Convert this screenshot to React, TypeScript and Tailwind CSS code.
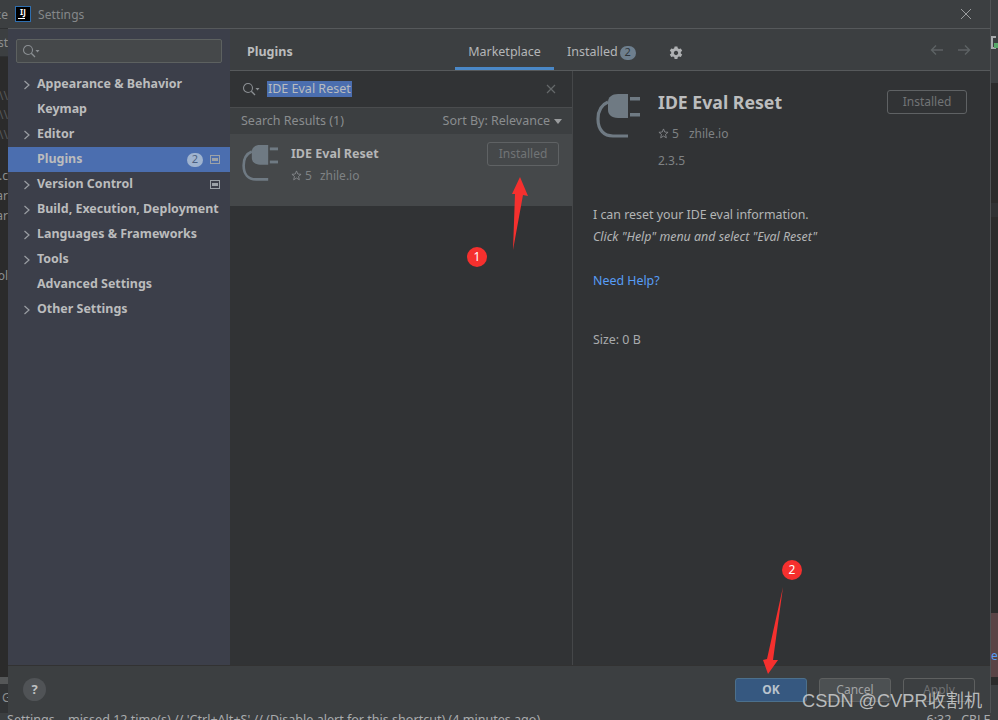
import React from "react";

const FONT = { fontFamily: '"Noto Sans", "Open Sans", sans-serif' };

function Chevron() {
  return (
    <svg width="8" height="10" viewBox="0 0 8 10" className="shrink-0">
      <path d="M1.5 1 L6 5 L1.5 9" fill="none" stroke="#9a9ea3" strokeWidth="1.2" />
    </svg>
  );
}

function Frame() {
  return (
    <svg width="11" height="9" viewBox="0 0 11 9" className="shrink-0">
      <rect x="0.5" y="0.5" width="9" height="8" fill="none" stroke="#9ca2a8" />
      <rect x="2" y="3" width="6" height="3" fill="#9ca2a8" />
    </svg>
  );
}

function SearchIcon() {
  return (
    <svg width="18" height="14" viewBox="0 0 18 14" className="shrink-0">
      <circle cx="6" cy="6" r="4.5" fill="none" stroke="#8b8f93" strokeWidth="1.1" />
      <path d="M9.3 9.3 L13 13" stroke="#8b8f93" strokeWidth="1.3" />
      <path d="M13.5 6 L17.5 6 L15.5 8.5 Z" fill="#8b8f93" />
    </svg>
  );
}

function Plug({ className }: { className: string }) {
  return (
    <svg viewBox="0 0 44 44" className={className}>
      <path d="M12 8 C5 11 2 17 2 25 C2 36 8 42 17 42 L32 42" fill="none" stroke="#6f7a83" strokeWidth="3.2" />
      <path d="M22 0 L32 0 L32 24 L22 24 C15 24 12 20 12 16 L12 8 C12 3 16 0 22 0 Z" fill="#6f7a83" />
      <rect x="34" y="3" width="10" height="3.5" fill="#6f7a83" />
      <rect x="34" y="19" width="10" height="3.5" fill="#6f7a83" />
    </svg>
  );
}

function Star() {
  return (
    <svg width="11" height="11" viewBox="0 0 12 12">
      <path d="M6 1 L7.4 4.4 L11 4.7 L8.2 7 L9.1 10.7 L6 8.8 L2.9 10.7 L3.8 7 L1 4.7 L4.6 4.4 Z" fill="none" stroke="#8a8d90" strokeWidth="0.9" />
    </svg>
  );
}

const items: { label: string; chevron?: boolean; selected?: boolean; badge?: boolean; frame?: boolean }[] = [
  { label: "Appearance & Behavior", chevron: true },
  { label: "Keymap" },
  { label: "Editor", chevron: true },
  { label: "Plugins", selected: true, badge: true, frame: true },
  { label: "Version Control", chevron: true, frame: true },
  { label: "Build, Execution, Deployment", chevron: true },
  { label: "Languages & Frameworks", chevron: true },
  { label: "Tools", chevron: true },
  { label: "Advanced Settings" },
  { label: "Other Settings", chevron: true },
];

function Sidebar() {
  return (
    <aside className="w-[222px] shrink-0 bg-[#3c3f4a] flex flex-col">
      <div className="mx-2 mt-[10px] h-6 border border-[#5d6160] bg-[#45484a] rounded-[2px] flex items-center pl-[5px] shrink-0">
        <SearchIcon />
      </div>
      <nav className="mt-[9px] flex flex-col">
        {items.map((it) => (
          <div key={it.label} className={`h-[25px] flex items-center pl-[15px] pr-[9px] ${it.selected ? "bg-[#4b6eaf]" : ""}`}>
            <span className="w-[14px] shrink-0 flex">{it.chevron && <Chevron />}</span>
            <span className="text-[12.45px] font-bold text-[#bbbcbd] whitespace-nowrap">{it.label}</span>
            <span className="ml-auto flex items-center gap-[7px]">
              {it.badge && (
                <span className="w-4 h-[14px] rounded-full bg-[#9fb3cf] text-[#4b5f80] text-[11px] flex items-center justify-center">2</span>
              )}
              {it.frame && <Frame />}
            </span>
          </div>
        ))}
      </nav>
    </aside>
  );
}

function Header() {
  return (
    <div className="h-[42px] shrink-0 border-b border-[#56595b] flex pl-[17px] pr-[19px] items-center bg-[#3c3f41]">
      <span className="w-[208px] shrink-0 text-[12.5px] font-bold text-[#bbbcbd] mt-[5px]">Plugins</span>
      <div className="h-full flex">
        <div className="w-[99px] h-full border-b-[3px] border-[#4a88c7] flex items-center justify-center text-[12.5px] text-[#b4b6b8] pt-[9px]">Marketplace</div>
        <div className="ml-[13px] flex items-center text-[12.5px] text-[#b4b6b8] gap-[2px] pt-[6px]">
          Installed
          <span className="w-4 h-[14px] rounded-full bg-[#6e7f8e] text-[#2f353a] text-[11px] flex items-center justify-center">2</span>
        </div>
        <svg width="14" height="14" viewBox="0 0 14 14" className="ml-[33px] self-center mt-[6px]">
          <path d="M5.6 0.5 h2.8 l0.4 1.8 l1.2 0.7 l1.8-0.6 l1.4 2.4 l-1.4 1.2 v1.4 l1.4 1.2 l-1.4 2.4 l-1.8-0.6 l-1.2 0.7 l-0.4 1.8 h-2.8 l-0.4-1.8 l-1.2-0.7 l-1.8 0.6 l-1.4-2.4 l1.4-1.2 v-1.4 l-1.4-1.2 l1.4-2.4 l1.8 0.6 l1.2-0.7 Z M7 4.8 a2.2 2.2 0 1 0 0.01 0 Z" fill="#afb1b3" fillRule="evenodd" />
        </svg>
      </div>
      <div className="ml-auto flex gap-[13px] items-center">
        <svg width="14" height="12" viewBox="0 0 14 12"><path d="M13 6 H2 M6 1.5 L1.5 6 L6 10.5" fill="none" stroke="#5d6264" strokeWidth="1.4" /></svg>
        <svg width="14" height="12" viewBox="0 0 14 12"><path d="M1 6 H12 M8 1.5 L12.5 6 L8 10.5" fill="none" stroke="#5d6264" strokeWidth="1.4" /></svg>
      </div>
    </div>
  );
}

function ResultsPane() {
  return (
    <section className="w-[343px] shrink-0 border-r border-[#454749] flex flex-col">
      <div className="h-[37px] shrink-0 border-b border-[#4a4c4e] flex items-center pl-[12px] pr-[16px]">
        <SearchIcon />
        <span className="ml-[7px] bg-[#4b6eaf] text-[#b9bcbf] text-[12.5px] leading-[16px] px-[1px]">IDE Eval Reset</span>
        <svg width="10" height="10" viewBox="0 0 10 10" className="ml-auto"><path d="M1 1 L9 9 M9 1 L1 9" stroke="#65686a" strokeWidth="1.2" /></svg>
      </div>
      <div className="h-[26px] shrink-0 bg-[#3c3f41] flex items-center pl-[11px] pr-[10px] text-[12.5px] text-[#8a8d8f]">
        Search Results (1)
        <span className="ml-auto flex items-center gap-[4px]">
          Sort By: Relevance
          <svg width="8" height="5" viewBox="0 0 8 5"><path d="M0 0 H8 L4 5 Z" fill="#9a9c9e" /></svg>
        </span>
      </div>
      <div className="h-[72px] shrink-0 bg-[#45484a] flex pl-[12px] pr-[13px] pt-[11px]">
        <Plug className="w-[36px] h-[36px] shrink-0" />
        <div className="ml-[13px] flex flex-col">
          <span className="text-[12.5px] font-bold text-[#b5b6b7] leading-[17px]">IDE Eval Reset</span>
          <span className="mt-[5px] flex items-center gap-[3px] text-[12px] text-[#7f8284] leading-[17px]">
            <Star />5<span className="ml-[5px]">zhile.io</span>
          </span>
        </div>
        <div className="ml-auto w-[72px] h-[24px] -mt-[3px] border border-[#5f6264] rounded-[3px] text-[12px] text-[#717476] flex items-center justify-center">Installed</div>
      </div>
    </section>
  );
}

function DetailPane() {
  return (
    <section className="flex-1 min-w-0 pl-[20px] pr-[23px] pt-[18px] text-[12.4px] text-[#a9abad]">
      <div className="flex">
        <Plug className="w-[44px] h-[44px] shrink-0 ml-[3px] mt-[5px]" />
        <div className="ml-[18px] flex flex-col">
          <span className="text-[17.7px] font-bold text-[#bcbdbe] leading-[26px]">IDE Eval Reset</span>
          <span className="mt-[10px] flex items-center gap-[3px] text-[12px] text-[#7f8284] leading-[17px]">
            <Star />5<span className="ml-[7px]">zhile.io</span>
          </span>
          <span className="mt-[10px] text-[12px] text-[#7f8284] leading-[17px]">2.3.5</span>
        </div>
        <div className="ml-auto w-20 h-6 mt-[1px] border border-[#5f6264] rounded-[3px] text-[12px] text-[#717476] flex items-center justify-center">Installed</div>
      </div>
      <p className="mt-[35px] leading-[22px] text-[#b3b5b6]">I can reset your IDE eval information.</p>
      <p className="leading-[22px] italic text-[#b3b5b6]">Click "Help" menu and select "Eval Reset"</p>
      <p className="mt-[22px] leading-[22px] text-[#589df6]">Need Help?</p>
      <p className="mt-[37px] leading-[22px]">Size: 0 B</p>
    </section>
  );
}

function Footer() {
  return (
    <div className="h-[48px] shrink-0 border-t border-[#323232] bg-[#3c3f41] flex items-center pl-[15px] pr-[15px]">
      <span className="w-[23px] h-[23px] rounded-full bg-[#505356] text-[#bfc1c2] text-[13px] font-bold flex items-center justify-center">?</span>
      <div className="ml-auto flex gap-[12px] mt-[1px]">
        <div className="w-[72px] h-6 rounded-[3px] border border-[#4c708c] bg-[#365880] text-[#b9c3cd] text-[12px] font-bold flex items-center justify-center">OK</div>
        <div className="w-[72px] h-6 rounded-[3px] border border-[#5e6060] bg-[#4c5052] text-[#a2a4a5] text-[12px] flex items-center justify-center">Cancel</div>
        <div className="w-[72px] h-6 rounded-[3px] border border-[#5e6060] text-[#6f7173] text-[12px] flex items-center justify-center">Apply</div>
      </div>
    </div>
  );
}

function Arrow({ d }: { d: string }) {
  return (
    <svg className="absolute left-0 top-0 pointer-events-none" width="998" height="720" viewBox="0 0 998 720">
      <path d={d} fill="#f5302e" />
    </svg>
  );
}

function Marker({ n, className }: { n: string; className: string }) {
  return (
    <span className={`absolute w-5 h-5 rounded-full bg-[#f5302e] text-white text-[12px] flex items-center justify-center ${className}`}>{n}</span>
  );
}

function LeftStrip() {
  return (
    <div className="w-[8px] shrink-0 flex flex-col text-[12px] text-[#8d8f90] overflow-hidden relative bg-[#2b2b2b]">
      <div className="h-[28px] bg-[#3c3f41] shrink-0" />
      <div className="h-[29px] bg-[#3c3f41] shrink-0 border-t border-[#2f3133] border-b" />
      <div className="flex-1" />
      <div className="h-[7px] bg-[#555758] shrink-0" />
      <div className="h-[29px] bg-[#313335] shrink-0" />
      <span className="absolute right-0 top-[6px]">ce</span>
      <span className="absolute right-0 top-[34px]">st</span>
      <span className="absolute right-0 top-[87px] text-[#55585a]">\\</span>
      <span className="absolute right-0 top-[106px] text-[#55585a]">\\</span>
      <span className="absolute right-0 top-[126px] text-[#55585a]">\\</span>
      <span className="absolute right-0 top-[167px]">.c</span>
      <span className="absolute right-0 top-[187px]">ar</span>
      <span className="absolute right-0 top-[207px]">ar</span>
      <span className="absolute right-0 top-[267px]">ol</span>
      <span className="absolute left-[2px] top-[689px]">G</span>
    </div>
  );
}

function RightStrip() {
  return (
    <div className="flex-1 flex flex-col relative overflow-hidden bg-[#2b2b2b] border-l border-[#505355]">
      <div className="h-[83px] bg-[#3c3f41] shrink-0" />
      <div className="h-[120px] shrink-0" />
      <div className="h-[14px] bg-[#303234] shrink-0" />
      <div className="flex-1" />
      <div className="h-[64px] bg-[#5a4446] shrink-0 text-[12px] text-[#589df6] leading-[15px] pt-[35px]">e</div>
      <div className="h-[8px] shrink-0" />
      <div className="h-[28px] bg-[#3c3f41] shrink-0" />
      <span className="absolute left-0 top-[36px] w-[5px] h-[13px] border-2 border-r-0 border-[#a9abad]" />
      <span className="absolute left-[3px] top-[43px] w-[4px] h-[5px] bg-[#59a869]" />
    </div>
  );
}

export default function App() {
  return (
    <div className="relative w-[998px] h-[720px] overflow-hidden bg-[#2b2b2b] flex flex-col" style={FONT}>
      <div className="flex h-[713px] shrink-0">
        <LeftStrip />
        <div className="w-[982px] shrink-0 flex flex-col bg-[#3c3f41]">
          <div className="h-[29px] shrink-0 border-b border-[#56595b] flex items-center pl-[7px] pr-[18px]">
            <span className="w-4 h-4 bg-black border border-[#2f6fb0] flex flex-col items-center">
              <span className="text-white text-[8px] font-bold leading-[9px]">IJ</span>
              <span className="w-[7px] h-px bg-white mt-[2px] self-start ml-[2px]" />
            </span>
            <span className="ml-[7px] text-[12px] tracking-[0.1px] text-[#85888a] mt-[1px]">Settings</span>
            <svg width="12" height="12" viewBox="0 0 12 12" className="ml-auto"><path d="M1 1 L11 11 M11 1 L1 11" stroke="#9a9c9e" strokeWidth="1" /></svg>
          </div>
          <div className="flex-1 min-h-0 flex">
            <Sidebar />
            <div className="flex-1 min-w-0 flex flex-col">
              <Header />
              <div className="flex-1 min-h-0 flex bg-[#313335]">
                <ResultsPane />
                <DetailPane />
              </div>
            </div>
          </div>
          <Footer />
        </div>
        <RightStrip />
      </div>
      <div className="h-[7px] shrink-0 bg-[#3c3f41] text-[12.55px] text-[#a9abad] leading-[12px] pl-[7px] whitespace-nowrap overflow-hidden flex pt-[1px]">
        Settings... missed 12 time(s) // 'Ctrl+Alt+S' // (Disable alert for this shortcut) (4 minutes ago)
        <span className="ml-auto pr-[8px]">6:32 &nbsp; CRLF</span>
      </div>
      <Arrow d="M520 177 L528 196 L523 195 L513 250 L515 194 L512 194 Z" />
      <Arrow d="M783 587 L773 660 L778 660 L768 674 L763 660 L767 659 Z" />
      <Marker n="1" className="left-[467px] top-[247px]" />
      <Marker n="2" className="left-[782px] top-[560px]" />
      <span className="absolute left-[802px] top-[688px] text-[18.2px] leading-[26px] text-[#cfd1d2]/85 whitespace-nowrap" style={{ fontFamily: '"Liberation Sans", "Noto Sans CJK SC", sans-serif' }}>CSDN @CVPR收割机</span>
    </div>
  );
}
